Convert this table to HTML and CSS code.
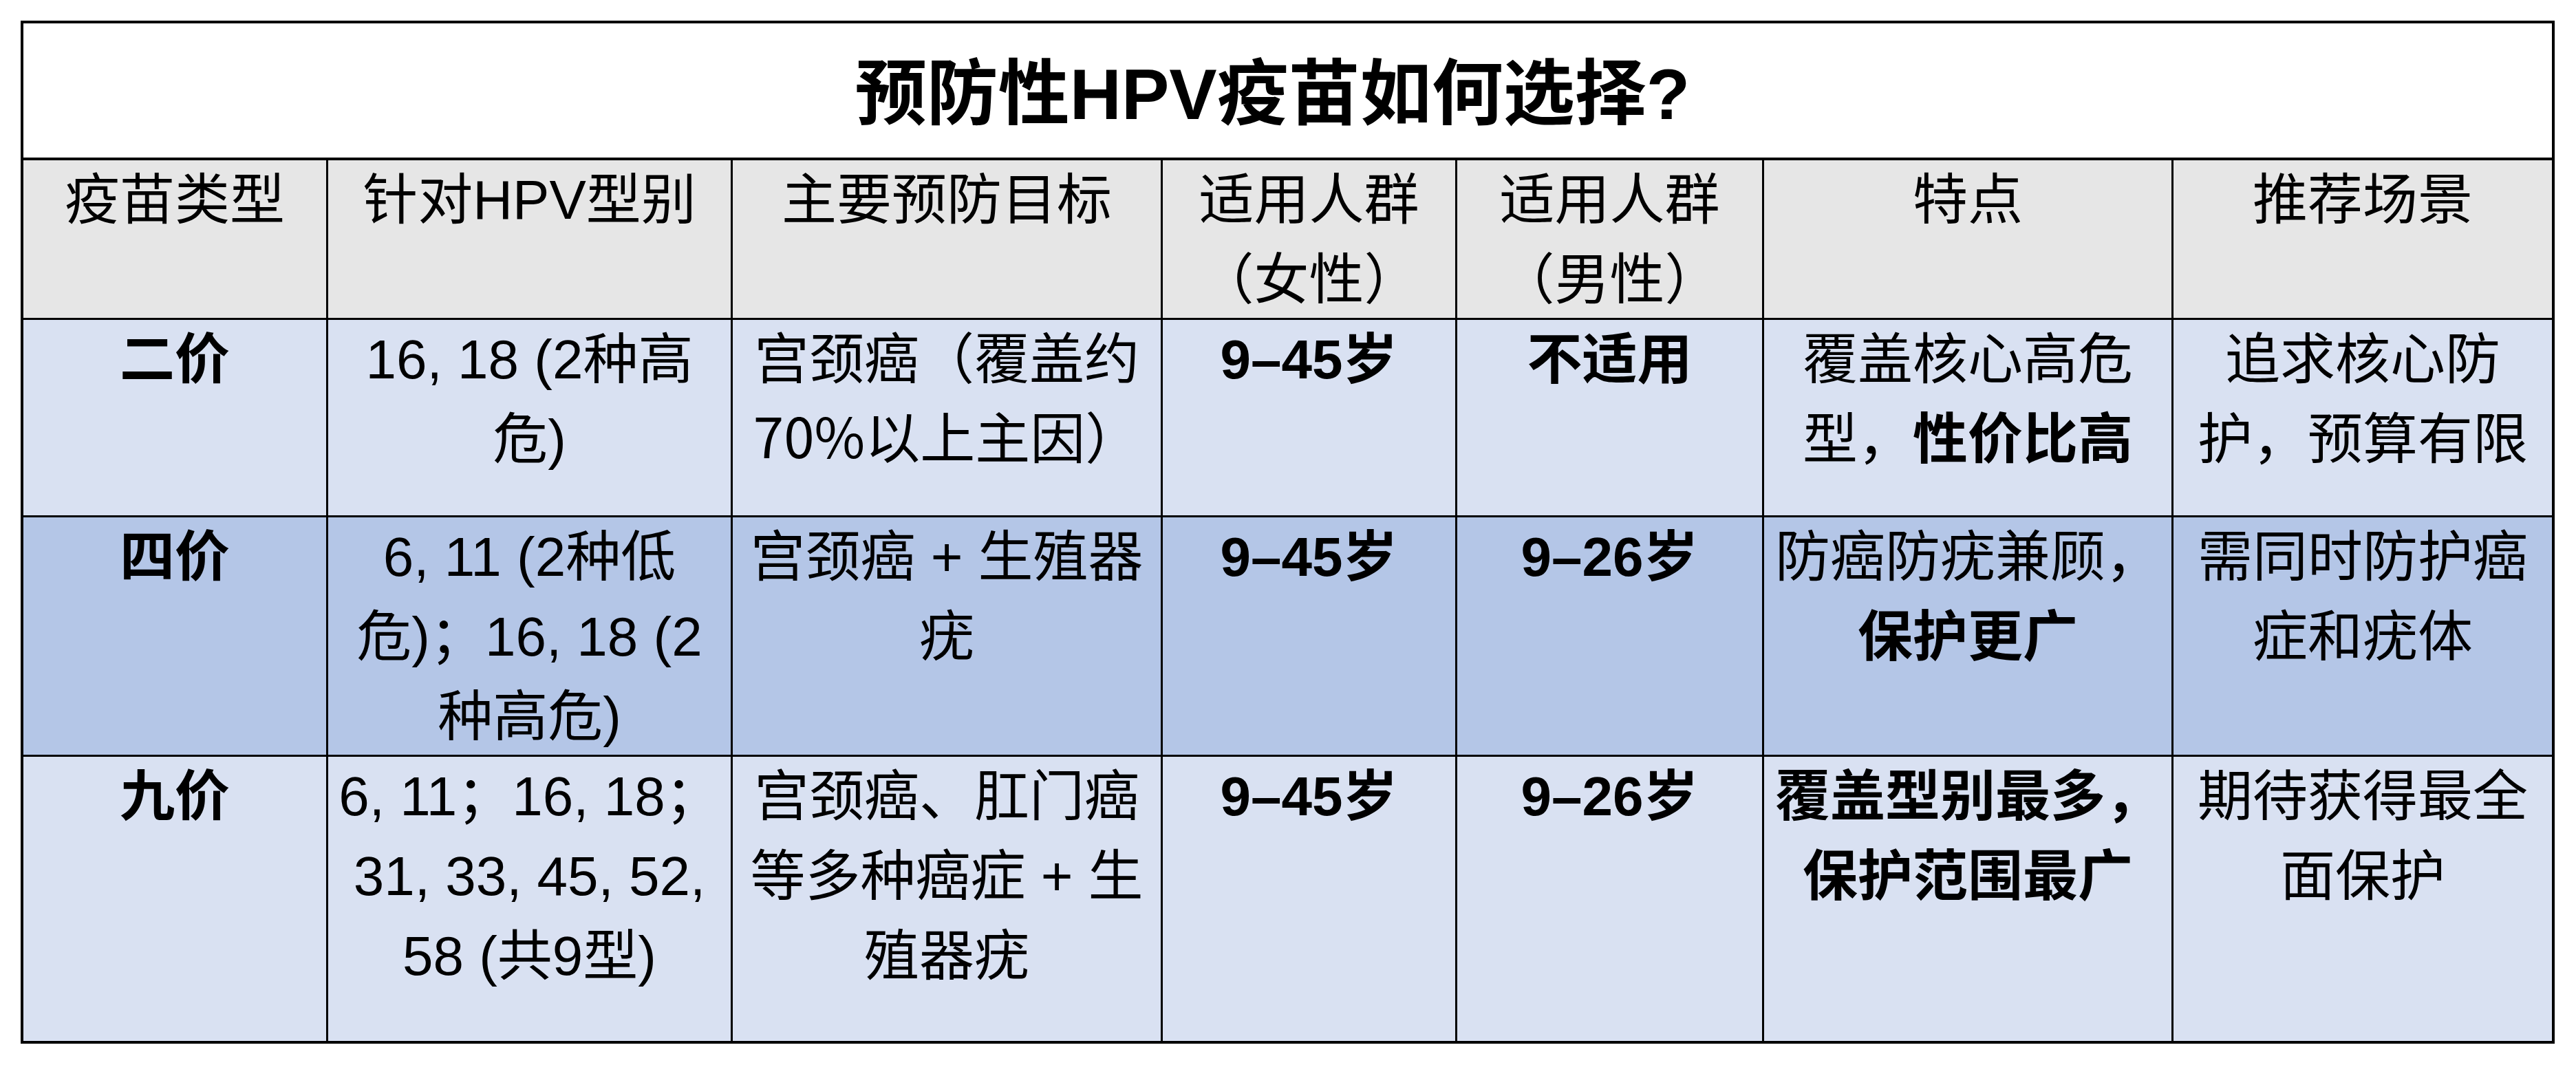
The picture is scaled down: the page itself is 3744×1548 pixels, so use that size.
FILE: index.html
```html
<!DOCTYPE html>
<html lang="zh-CN">
<head>
<meta charset="utf-8">
<title>预防性HPV疫苗如何选择?</title>
<link rel="stylesheet" href="styles.css">
</head>
<body>
<div class="page">
  <div class="sheet">
    <div class="title">预防性HPV疫苗如何选择?</div>

    <div class="cell head">疫苗类型</div>
    <div class="cell head">针对HPV型别</div>
    <div class="cell head">主要预防目标</div>
    <div class="cell head">适用人群<br>（女性）</div>
    <div class="cell head">适用人群<br>（男性）</div>
    <div class="cell head">特点</div>
    <div class="cell head">推荐场景</div>

    <div class="cell light bold">二价</div>
    <div class="cell light">16, 18 (2种高<br>危)</div>
    <div class="cell light">宫颈癌（覆盖约<br><span class="num">70%</span>以上主因）</div>
    <div class="cell light bold">9–45岁</div>
    <div class="cell light bold">不适用</div>
    <div class="cell light">覆盖核心高危<br>型，<b>性价比高</b></div>
    <div class="cell light">追求核心防<br>护，预算有限</div>

    <div class="cell mid bold">四价</div>
    <div class="cell mid">6, 11 (2种低<br>危)；16, 18 (2<br>种高危)</div>
    <div class="cell mid">宫颈癌 + 生殖器<br>疣</div>
    <div class="cell mid bold">9–45岁</div>
    <div class="cell mid bold">9–26岁</div>
    <div class="cell mid">防癌防疣兼顾，<br><b>保护更广</b></div>
    <div class="cell mid">需同时防护癌<br>症和疣体</div>

    <div class="cell light bold">九价</div>
    <div class="cell light">6, 11；16, 18；<br>31, 33, 45, 52,<br>58 (共9型)</div>
    <div class="cell light">宫颈癌、肛门癌<br>等多种癌症 + 生<br>殖器疣</div>
    <div class="cell light bold">9–45岁</div>
    <div class="cell light bold">9–26岁</div>
    <div class="cell light bold">覆盖型别最多，<br>保护范围最广</div>
    <div class="cell light">期待获得最全<br>面保护</div>
  </div>
</div>
</body>
</html>
```

FILE: styles.css
```css
html, body {
  margin: 0;
  padding: 0;
  background: #ffffff;
}

.page {
  padding: 30px;
}

.sheet {
  display: grid;
  grid-template-columns: 440px 585px 622px 425px 443px 592px 550px;
  grid-template-rows: 196px 229px 284px 345px 413px;
  gap: 3px;
  width: max-content;
  background: #000000;
  border: 4px solid #000000;
  font-family: "Liberation Sans", "Noto Sans CJK SC", sans-serif;
  color: #000000;
}

.title {
  grid-column: 1 / -1;
  margin-bottom: 1px;
  background: #ffffff;
  display: flex;
  align-items: center;
  justify-content: center;
  padding: 10px 44px 0 0;
  box-sizing: border-box;
  font-size: 104px;
  font-weight: 700;
  line-height: 1;
  white-space: nowrap;
}

.cell {
  padding: 0 8px;
  text-align: center;
  font-size: 80px;
  line-height: 116px;
  white-space: nowrap;
}

.cell b,
.bold {
  font-weight: 700;
}

.head {
  background: #e6e6e6;
}

.light {
  background: #d9e1f2;
}

.mid {
  background: #b4c6e7;
}

.num {
  font-family: "Noto Sans CJK SC", sans-serif;
  line-height: 100px;
}
```
